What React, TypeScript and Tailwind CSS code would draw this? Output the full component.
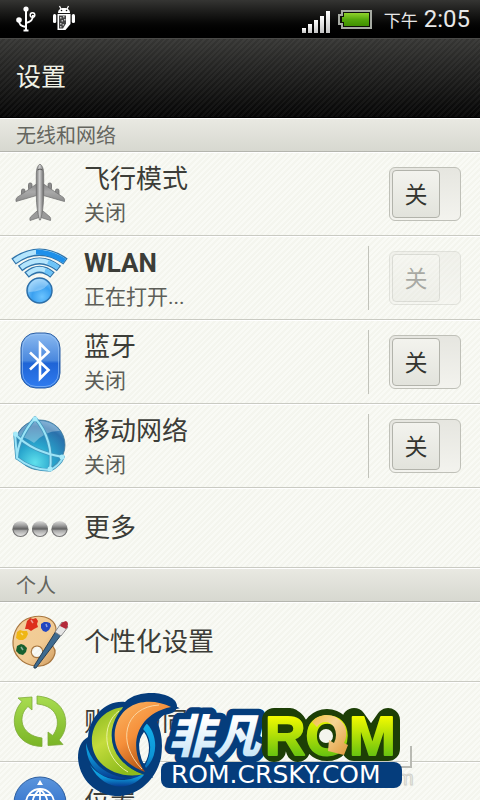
import { useState } from 'react'
import type { ReactNode } from 'react'

type SettingItem = {
  id: string
  title: string
  status?: string
  icon: ReactNode
  hasSwitch?: boolean
  divider?: boolean
  disabled?: boolean
}

const UsbIcon = () => (
  <svg className="h-7 w-5" viewBox="0 0 20 28" fill="none" stroke="#fff" strokeWidth="2">
    <path d="M10 4v21M3 15c0 5 2 6 7 7M17 10c0 5-2 7-7 8" />
    <circle cx="10" cy="4" r="2.6" fill="#fff" stroke="none" />
    <circle cx="3" cy="15" r="2.8" fill="#fff" stroke="none" />
    <circle cx="16.500" cy="10" r="2.300" strokeWidth="1.500" />
    <path d="M7.500 25.500h5" />
  </svg>
)

const AndroidIcon = () => (
  <svg className="h-7 w-6" viewBox="0 0 24 28" fill="#fff">
    <path d="M6 8c0-3 2-5 6-5s6 2 6 5z" />
    <path d="M7.500 1l1.500 3M16.500 1L15 4" stroke="#fff" strokeWidth="1.200" />
    <circle cx="9.500" cy="5.500" r=".8" fill="#111" />
    <circle cx="14.500" cy="5.500" r=".8" fill="#111" />
    <rect x="1" y="9" width="3.200" height="9" rx="1.500" />
    <rect x="19.800" y="9" width="3.200" height="9" rx="1.500" />
    <path d="M5.500 9h13v10l-5 6h-8z" />
    <path d="M7 10.500h7v8l-3 5H7z" fill="#444" />
    <path
      d="M8 12h1.500v1.500H8zM11 11h1.500v1.500H11zM9.500 15H11v1.500H9.500zM8 18h1.500v1.500H8zM12 14h1.500v1.500H12zM10.500 19H12v1.500h-1.500zM8 21h1.500v1.500H8z"
      fill="#bbb"
    />
  </svg>
)

const SignalIcon = () => (
  <svg className="h-6 w-7" viewBox="0 0 28 24">
    <defs>
      <linearGradient id="sig" x1="0" y1="0" x2="0" y2="1">
        <stop offset="0" stopColor="#fff" />
        <stop offset="1" stopColor="#c4c4c4" />
      </linearGradient>
    </defs>
    <g fill="url(#sig)">
      <rect x="0" y="18" width="4" height="5" />
      <rect x="6" y="14" width="4" height="9" />
      <rect x="12" y="10" width="4" height="13" />
      <rect x="18" y="6" width="4" height="17" />
      <rect x="24" y="1" width="4" height="22" />
    </g>
  </svg>
)

const BatteryIcon = () => (
  <svg className="h-5 w-9" viewBox="0 0 36 20">
    <defs>
      <linearGradient id="bat" x1="0" y1="0" x2="0" y2="1">
        <stop offset="0" stopColor="#8fd22c" />
        <stop offset=".5" stopColor="#55a80c" />
        <stop offset="1" stopColor="#3f9000" />
      </linearGradient>
    </defs>
    <path d="M4 1h29v17H4v-4H1V5h3z" fill="#0c0f08" stroke="#a6aaa2" strokeWidth="2" />
    <path d="M6 3h25v13H6v-4H4V7h2z" fill="url(#bat)" />
  </svg>
)

const AirplaneIcon = () => (
  <svg className="size-15" viewBox="0 0 60 60">
    <defs>
      <linearGradient id="plane" x1="0" y1="0" x2="0" y2="1">
        <stop offset="0" stopColor="#8a8a8a" />
        <stop offset=".45" stopColor="#a9a9a9" />
        <stop offset="1" stopColor="#8c8c8c" />
      </linearGradient>
      <linearGradient id="body">
        <stop offset="0" stopColor="#777" />
        <stop offset=".45" stopColor="#cfcfcf" />
        <stop offset="1" stopColor="#666" />
      </linearGradient>
    </defs>
    <g fill="#8b8b8b" stroke="#6a6a6a" strokeWidth=".8">
      <rect x="11.500" y="25" width="3.500" height="7" rx="1.500" />
      <rect x="18.500" y="19" width="3.500" height="7" rx="1.500" />
      <rect x="38" y="19" width="3.500" height="7" rx="1.500" />
      <rect x="45.500" y="25" width="3.500" height="7" rx="1.500" />
    </g>
    <path
      d="M26.500 20L7 33.500q-1.500 1.500-1 4l20.500-6zM33.500 20L53.500 33.500q1.500 1.500 1 4L33.500 31.500z"
      fill="url(#plane)"
      stroke="#777"
      strokeWidth=".8"
    />
    <path d="M27 47l-6.500 6q-1 1.500-.5 3.500l9-3h2l9.500 3q.5-2-.5-3.500l-7-6z" fill="#9a9a9a" stroke="#777" strokeWidth=".8" />
    <path d="M30 0q3.500 2 3.700 10V31q-.3 15-3.200 25h-1q-3-10-3.200-25V10Q26.500 2 30 0z" fill="url(#body)" stroke="#757575" strokeWidth=".8" />
    <path d="M27.500 6q2.500-2 5 0" stroke="#555" strokeWidth="1" fill="none" />
  </svg>
)

const WlanIcon = () => (
  <svg className="size-15" viewBox="0 0 60 60" fill="none">
    <defs>
      <radialGradient id="ball" cx=".6" cy=".75" r=".8">
        <stop offset="0" stopColor="#6cc4ff" />
        <stop offset=".5" stopColor="#3aa0f0" />
        <stop offset="1" stopColor="#8fd0fb" />
      </radialGradient>
    </defs>
    <g stroke="#2f73aa">
      <path d="M3.500 13.500Q29.500-5 55.500 13.500" strokeWidth="7.500" />
      <path d="M10 20.500Q29.500 5.500 49 20.500" strokeWidth="7" />
      <path d="M16.500 27Q29.500 16 42.500 27" strokeWidth="7" />
    </g>
    <g stroke="#b4e5fd">
      <path d="M4.500 13Q29.500-5 54.500 13" strokeWidth="5" />
      <path d="M11 19.800Q29.500 5.500 48 19.800" strokeWidth="4.500" />
      <path d="M17.500 26.300Q29.500 16 41.500 26.300" strokeWidth="4.500" />
    </g>
    <path d="M26 4Q41 4 54.500 13" stroke="#1e90ea" strokeWidth="5" />
    <path d="M38 14Q43 16 48 19.800M35 22.500Q38 23.500 41.500 26.300" stroke="#6cc3f8" strokeWidth="4.500" />
    <circle cx="29.500" cy="42.500" r="12.500" fill="url(#ball)" stroke="#2c6ea8" strokeWidth="1.500" />
    <path d="M18.500 44a11 11 0 0 1 20-8q-6 8-20 8z" fill="#fff" opacity=".3" />
  </svg>
)

const BluetoothIcon = () => (
  <svg className="size-15" viewBox="0 0 60 60" fill="none">
    <defs>
      <linearGradient id="bt" x1="0" y1="0" x2="0" y2="1">
        <stop offset="0" stopColor="#8bbaf0" />
        <stop offset=".5" stopColor="#4a88de" />
        <stop offset=".55" stopColor="#1f64d6" />
        <stop offset="1" stopColor="#2f7cf0" />
      </linearGradient>
    </defs>
    <rect x="11" y="1" width="39" height="55" rx="15" fill="url(#bt)" stroke="#2c5fa3" />
    <rect x="12.500" y="2.500" width="36" height="52" rx="13.500" stroke="#9cc6f7" strokeOpacity=".6" />
    <path d="M20 20.500L38.500 38 30 46.500v-35l8.500 8.500L20 37.500" stroke="#fff" strokeWidth="2.600" />
  </svg>
)

const GlobeIcon = () => (
  <svg className="size-15" viewBox="0 0 60 60" fill="none">
    <defs>
      <radialGradient id="globe" cx=".4" cy=".85" r=".9">
        <stop offset="0" stopColor="#5fe0ec" />
        <stop offset=".4" stopColor="#28a5cd" />
        <stop offset=".8" stopColor="#2a70ab" />
        <stop offset="1" stopColor="#5c9fcf" />
      </radialGradient>
    </defs>
    <circle cx="30" cy="29" r="25" fill="url(#globe)" stroke="#3b7596" strokeWidth=".8" />
    <path d="M7 20A25 25 0 0 1 50 15Q36 14 24 27q-8-6-17-7z" fill="#fff" opacity=".3" />
    <g strokeLinecap="round">
      <path
        d="M25 2Q44 24 40 54M5 18Q22 36 53 41M25 2Q8 22 7 42M7 42Q22 54 40 54M53 41Q50 49 40 54M5 18L7 42"
        stroke="#4397bd"
        strokeWidth="3.500"
      />
      <path
        d="M25 2Q44 24 40 54M5 18Q22 36 53 41M25 2Q8 22 7 42M7 42Q22 54 40 54M53 41Q50 49 40 54M5 18L7 42"
        stroke="#9be4f7"
        strokeWidth="2"
      />
    </g>
    <g fill="#a8ebfa">
      <circle cx="25" cy="3" r="2.500" />
      <circle cx="5.500" cy="18" r="2.500" />
      <circle cx="52" cy="41" r="2.500" />
      <circle cx="40" cy="53" r="2.500" />
    </g>
  </svg>
)

const MoreIcon = () => (
  <svg className="size-15" viewBox="0 0 60 60">
    <defs>
      <linearGradient id="bead" x1="0" y1="0" x2="0" y2="1">
        <stop offset="0" stopColor="#dededc" />
        <stop offset=".3" stopColor="#9a9a9a" />
        <stop offset=".5" stopColor="#606060" />
        <stop offset=".6" stopColor="#a8a8a8" />
        <stop offset="1" stopColor="#f0f0ee" />
      </linearGradient>
    </defs>
    {[10.5, 30, 49.5].map((cx) => (
      <g key={cx}>
        <circle cx={cx} cy="31" r="8" fill="url(#bead)" />
        <path d={`M${cx - 7.5} 31a7.500 7.500 0 0 0 15 0`} fill="none" stroke="#777" strokeWidth="1.200" />
      </g>
    ))}
  </svg>
)

const PaletteIcon = () => (
  <svg className="size-15" viewBox="0 0 60 60">
    <defs>
      <linearGradient id="wood" x1="0" y1="0" x2="1" y2="1">
        <stop offset="0" stopColor="#f3cf9a" />
        <stop offset=".6" stopColor="#f1cb94" />
        <stop offset="1" stopColor="#cf9a5c" />
      </linearGradient>
    </defs>
    <path
      d="M25 4.500C37 3 46 9 46 18c0 5-5 7-5 12s5 5 4 11c-2 9-10 14-19 13C13 53 2 43 3 29 4 15 13 6 25 4.500zM27 34a5.800 5.800 0 1 0 .1 0z"
      fill="url(#wood)"
      stroke="#a87740"
      strokeWidth="1.200"
      fillRule="evenodd"
    />
    <path d="M17 9l3-3 3 1 3-1 2 3-1 3 1 3-4 2-3 2-3-2-3 0 1-4z" fill="#dd2f1c" />
    <path d="M31 12l3-2 3 0 3 1 1 3-2 4-3 2-3-1-2-3z" fill="#2246c0" />
    <path d="M7 20l3-2 3 1 4 0 1 3-2 4-3 2-4 0-3-2z" fill="#efb614" />
    <path d="M7 34l4-2 3 1 3 3-1 4-3 3-4-1-3-3z" fill="#17602f" />
    <path d="M21 8l2 3M36 12l1 3M11 21l2 2M11 35l2 3" stroke="#fff" strokeOpacity=".5" strokeWidth="1.500" />
    <path d="M46 19l5 4-25 33q-3 1-2-2z" fill="#3e6b90" stroke="#20394e" strokeWidth=".9" />
    <path d="M45 20l7-10 6 5-7 9z" fill="#e5e5e5" stroke="#777" strokeWidth=".8" />
    <path d="M50 14q1-4 6-5 2 1 2 3 0 3-2 5z" fill="#b3293a" />
  </svg>
)

const SyncIcon = () => (
  <svg className="size-15" viewBox="0 0 60 60">
    <defs>
      <linearGradient id="sync" x1="0" y1="0" x2="0" y2="1">
        <stop offset="0" stopColor="#a8dc50" />
        <stop offset="1" stopColor="#7ab526" />
      </linearGradient>
    </defs>
    <g fill="url(#sync)" stroke="#7fab3a" strokeWidth=".8">
      <path d="M8 6l14-1v13l-4-3.500C8 23 9 43 32 46v8.500C4 54 -3 26 12 9.500z" />
      <path d="M27 4C57 6 62 34 49 48l4 4.500-15 1V40l4.500 3.500C51 34 50 14 27 12z" />
    </g>
  </svg>
)

const LocationIcon = () => (
  <svg className="size-15" viewBox="0 0 60 60" fill="none">
    <defs>
      <linearGradient id="loc" x1="0" y1="0" x2="0" y2="1">
        <stop offset="0" stopColor="#5b95dc" />
        <stop offset="1" stopColor="#1c5fc4" />
      </linearGradient>
    </defs>
    <circle cx="30" cy="31" r="26" fill="url(#loc)" stroke="#2d5e9e" />
    <path d="M30 8l3 5h-6z" fill="#fff" />
    <g stroke="#fff" strokeWidth="1.800">
      <circle cx="30" cy="31" r="14" />
      <path d="M30 17v28M16 31h28M18.500 23h23M30 17q-15 14 0 28M30 17q15 14 0 28" />
    </g>
  </svg>
)

const wireless: SettingItem[] = [
  { id: 'airplane', title: '飞行模式', status: '关闭', icon: <AirplaneIcon />, hasSwitch: true },
  { id: 'wlan', title: 'WLAN', status: '正在打开...', icon: <WlanIcon />, hasSwitch: true, divider: true, disabled: true },
  { id: 'bluetooth', title: '蓝牙', status: '关闭', icon: <BluetoothIcon />, hasSwitch: true, divider: true },
  { id: 'mobile', title: '移动网络', status: '关闭', icon: <GlobeIcon />, hasSwitch: true, divider: true },
  { id: 'more', title: '更多', icon: <MoreIcon /> },
]

const personal: SettingItem[] = [
  { id: 'personalize', title: '个性化设置', icon: <PaletteIcon /> },
  { id: 'sync', title: '账户与同步', icon: <SyncIcon /> },
  { id: 'location', title: '位置', icon: <LocationIcon /> },
]

function Toggle({ label, disabled }: { label: string; disabled?: boolean }) {
  const [on, setOn] = useState(false)

  return (
    <button
      type="button"
      role="switch"
      aria-checked={on}
      aria-label={label}
      disabled={disabled}
      onClick={() => setOn(!on)}
      className={`flex h-[54px] w-[72px] shrink-0 items-center rounded-md border border-[#bfc0b8] bg-linear-to-b from-[#e6e6e0] to-[#f3f3ee] p-[2px] ${on ? 'justify-end' : ''} ${disabled ? 'opacity-40' : ''}`}
    >
      <span className="flex size-12 items-center justify-center rounded border border-[#b2b3ab] bg-linear-to-b from-[#f3f3ee] to-[#e2e3dc] pt-1 text-[23px] leading-7 text-[#33342f]">
        {on ? '开' : '关'}
      </span>
    </button>
  )
}

function SettingRow({ item }: { item: SettingItem }) {
  return (
    <li className={`flex items-center border-b border-[#c9cac2] border-t border-t-white pr-[19px] ${item.status ? 'h-21' : 'h-20'}`}>
      <button type="button" className="flex min-w-0 flex-1 items-center gap-3.5 pl-2.5 text-left">
        {item.icon}
        <span className={`flex flex-col gap-1 ${item.status ? 'pt-0.5' : ''}`}>
          <span className={`text-[26px] leading-8 text-[#3c3d38] ${item.id === 'wlan' ? 'font-bold' : ''}`}>
            {item.title}
          </span>
          {item.status && <span className="text-[21px] leading-7 text-[#5d5e58]">{item.status}</span>}
        </span>
      </button>
      {item.divider && <span className="mr-5 h-16 w-px bg-[#c2c3bb]" />}
      {item.hasSwitch && <Toggle label={item.title} disabled={item.disabled} />}
    </li>
  )
}

function Section({ title, items }: { title: string; items: SettingItem[] }) {
  return (
    <section>
      <h2 className="flex h-[34px] items-center border-b border-[#b4b5ae] border-t border-t-white bg-linear-to-b from-[#e9e9e2] to-[#d7d8d0] px-4 pt-0.5 text-[20px] leading-6 text-[#65665f]">
        {title}
      </h2>
      <ul>
        {items.map((item) => (
          <SettingRow key={item.id} item={item} />
        ))}
      </ul>
    </section>
  )
}

// Site badge that floats over the bottom of the list
function Badge() {
  return (
    <svg className="pointer-events-none absolute bottom-0 left-[76px] h-28 w-[344px]" viewBox="76 688 344 112">
      <defs>
        <linearGradient id="lime" x1="0" y1="0" x2="0" y2="1">
          <stop offset=".2" stopColor="#f2fa00" />
          <stop offset=".85" stopColor="#62c010" />
        </linearGradient>
        <linearGradient id="ice" x1="0" y1="0" x2="0" y2="1">
          <stop offset=".3" stopColor="#ffffff" />
          <stop offset="1" stopColor="#b9dff6" />
        </linearGradient>
        <linearGradient id="orange" x1="0" y1="0" x2=".6" y2="1">
          <stop offset="0" stopColor="#fbb765" />
          <stop offset=".5" stopColor="#f58f3a" />
          <stop offset="1" stopColor="#a84a0c" />
        </linearGradient>
        <linearGradient id="leaf" x1="0" y1="0" x2=".5" y2="1">
          <stop offset="0" stopColor="#84b51e" />
          <stop offset=".5" stopColor="#c4dc3c" />
          <stop offset="1" stopColor="#8dbb1c" />
        </linearGradient>
        <linearGradient id="sea" x1="0" y1="0" x2="0" y2="1">
          <stop offset="0" stopColor="#12b0ea" />
          <stop offset=".6" stopColor="#0d95d6" />
          <stop offset="1" stopColor="#073c92" />
        </linearGradient>
        <linearGradient id="amber" x1="0" y1="0" x2="1" y2="1">
          <stop offset="0" stopColor="#f0c040" />
          <stop offset=".4" stopColor="#f8d594" />
          <stop offset="1" stopColor="#e09a3c" />
        </linearGradient>
      </defs>

      <g fill="none" stroke="#f7f8f3" strokeWidth="2">
        <path d="M411 746v21h-12" stroke="#b9bab3" />
        <path d="M409 746v19h-12" />
      </g>
      <text x="397" y="785" className="font-['Liberation_Sans'] text-[20px]" fill="#f4f5ef" stroke="#d0d1ca">
        m
      </text>

      {/* swirl */}
      <path
        fillRule="evenodd"
        fill="#053d7c"
        d="M125 702C132 695 142 693 152 693C164 693 177 698 177 706C177 712 171 714 164 715C161 717 159 719 157 722C162 732 163 745 161 758C155 783 135 797 115 796C93 794 79 777 78 758C78 748 81 741 88 737C90 716 106 700 125 702ZM144 732C139 738 137 748 140 758C142 763 144 764 145 763C150 755 151 741 144 732Z"
      />
      <path
        d="M86 743C86 765 99 780 122 779C144 777 157 760 155 742C154 732 149 724 144 722L141 727C149 734 152 744 149 756C147 763 144 769 139 772L143 777C120 782 93 772 86 743Z"
        fill="url(#sea)"
      />
      <path d="M90 765C103 782 128 785 146 772C136 789 106 796 90 765Z" fill="url(#sea)" />
      <path d="M123 707C93 711 84 742 99 761C110 774 128 778 145 774C118 768 107 741 123 707Z" fill="url(#leaf)" />
      <path d="M119 711C101 724 102 757 128 772" stroke="#eaf2a2" strokeWidth="1" fill="none" />
      <path
        d="M171 707C152 697 121 699 115 730C112 752 128 766 145 772C129 750 133 715 171 707Z"
        fill="url(#orange)"
        stroke="#053d7c"
        strokeWidth="6"
        paintOrder="stroke"
      />
      <path d="M159 705C124 707 116 743 142 769" stroke="#fbd5a0" strokeWidth="1" fill="none" />

      <text
        x="168"
        y="753"
        className="font-['Noto_Sans_CJK_SC',sans-serif] text-[46px] font-black italic"
        fill="url(#ice)"
        stroke="#053d7c"
        strokeWidth="13"
        strokeLinejoin="round"
        paintOrder="stroke"
      >
        非凡
      </text>

      {/* dark backing behind the green letters */}
      <g fill="#1d3f06" stroke="#1d3f06" strokeWidth="24" strokeLinejoin="round" strokeLinecap="round">
        <path d="M274 720v30M274 720h16q10 6 4 16l4 14" />
        <circle cx="327" cy="735" r="14" />
        <path d="M354 749v-29l17 24 17-24v29z" />
      </g>
      <circle cx="326" cy="736" r="7" fill="#f4f5ee" />
      <text
        x="265"
        y="755"
        className="font-['Liberation_Sans',sans-serif] text-[56px] font-bold"
        fill="url(#lime)"
        stroke="url(#lime)"
        strokeWidth="2"
        strokeLinejoin="round"
      >
        ROM
      </text>
      <path d="M312 722C322 710 340 715 345 727Q348 735 344 743L348 745 344 755 328 751 329 740 334 743Q338 735 334 727C329 720 321 721 317 727Z" fill="url(#amber)" />
      <rect x="161" y="762" width="241" height="26" rx="8" fill="#053d7c" />
      <text x="171" y="783" className="font-['DejaVu_Sans',sans-serif] text-[25px]" fill="#fff">
        ROM.CRSKY.COM
      </text>
    </svg>
  )
}

export default function App() {
  return (
    <div className="relative flex h-screen flex-col overflow-hidden bg-[#f6f7f1] bg-[repeating-linear-gradient(135deg,#f9faf5_0px,#f9faf5_2px,#f4f5ee_2px,#f4f5ee_4px)] font-[Roboto,'Noto_Sans_CJK_SC',sans-serif]">
      <div className="flex h-[38px] shrink-0 items-center justify-between bg-linear-to-b from-[#353533] to-black pl-4 pr-2.5 text-[#e8e8e8]">
        <div className="flex items-center gap-4">
          <UsbIcon />
          <AndroidIcon />
        </div>
        <div className="flex items-center">
          <span className="pt-1.5">
            <SignalIcon />
          </span>
          <span className="ml-2 pt-0.5">
            <BatteryIcon />
          </span>
          <span className="ml-2.5 pt-1 text-[17px] leading-6">下午</span>
          <span className="ml-1.5 text-[24px] leading-7">2:05</span>
        </div>
      </div>

      <header className="flex h-20 shrink-0 items-center border-b border-black border-t border-t-[#4a4a48] bg-[repeating-linear-gradient(135deg,rgba(255,255,255,0.04)_0px,rgba(255,255,255,0.04)_2px,transparent_2px,transparent_4px),linear-gradient(#363634,#050505)] px-4">
        <h1 className="text-[25px] leading-8 text-[#f1f2e6]">设置</h1>
      </header>

      <main className="min-h-0 flex-1 overflow-hidden">
        <Section title="无线和网络" items={wireless} />
        <Section title="个人" items={personal} />
      </main>

      <Badge />
    </div>
  )
}
